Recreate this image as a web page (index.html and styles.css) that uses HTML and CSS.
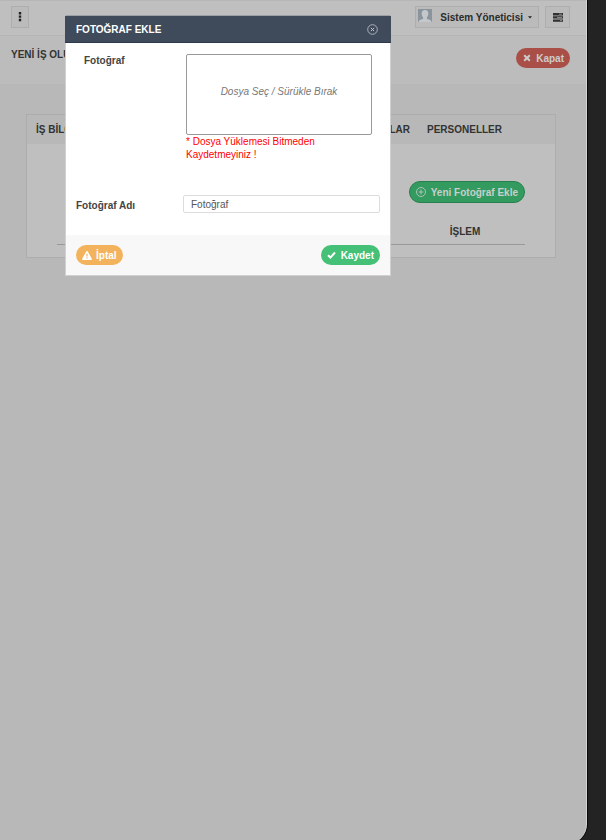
FILE: index.html
```html
<!DOCTYPE html>
<html lang="tr">
<head>
    <meta charset="UTF-8">
    <meta name="viewport" content="width=device-width, initial-scale=1.0">
    <title>Yeni İş</title>
    <link rel="stylesheet" href="styles.css">
</head>
<body>

    <div class="window">
        <!-- Top bar -->
        <header class="topbar">
            <button type="button" class="tool-btn menu-btn" aria-label="Menü">
                <svg width="4" height="10" viewBox="0 0 4 10" fill="#222"><path d="M.8 0h2.4v2.4H.8zM.8 3.4h2.4v2.4H.8zM.8 6.8h2.4v2.4H.8z"/></svg>
            </button>
            <div class="topbar-right">
                <button type="button" class="tool-btn user-btn">
                    <svg class="avatar" width="14" height="14" viewBox="0 0 14 14"><path fill="#89949c" d="M0 0h14v13H0z"/><path fill="#c5c8ca" d="M7 1c2.200 0 3.500 1.500 3.300 3.900-.1 1.600-.7 2.700-1.400 3.400v1.400c.8.700 3.300.8 4.100 2.100L13.500 13H.5l.5-1.200c.8-1.300 3.300-1.400 4.100-2.100V8.300c-.7-.7-1.300-1.800-1.400-3.400C3.500 2.500 4.800 1 7 1z"/></svg>
                    <span>Sistem Yöneticisi</span>
                    <svg class="caret" width="4" height="3" viewBox="0 0 4 3"><path fill="#222" d="M0 .3h4L2 2.500z"/></svg>
                </button>
                <button type="button" class="tool-btn tasks-btn" aria-label="Görevler">
                    <svg width="10" height="9" viewBox="0 0 10 9"><path fill="#303030" d="M0 0h10v2.400H0zM0 3.200h10v2.400H0zM0 6.400h10v2.400H0z"/><path fill="#a0a0a0" d="M6 .8h3v.8H6zM4 4h5v.8H4zM7 7.200h2V8H7z"/></svg>
                </button>
            </div>
        </header>

        <!-- Page heading -->
        <section class="page-head">
            <h1>YENİ İŞ OLU</h1>
            <button type="button" class="pill pill-red">
                <svg width="8" height="8" viewBox="0 0 8 8"><path d="M1.200 1.200l5.600 5.600M6.800 1.200L1.200 6.800" stroke="currentColor" stroke-width="2" fill="none"/></svg>
                <span>Kapat</span>
            </button>
        </section>

        <!-- Tabs and photo list -->
        <main class="content">
            <div class="panel">
                <nav class="tabs">
                    <a href="#is">İŞ BİLGİLERİ</a>
                    <a href="#fotograflar" class="tab-photos">FOTOĞRAFLAR</a>
                    <a href="#personeller">PERSONELLER</a>
                </nav>
                <div class="panel-body">
                    <button type="button" class="pill pill-add">
                        <svg width="10" height="10" viewBox="0 0 10 10" fill="none" stroke="currentColor" stroke-width=".8"><circle cx="5" cy="5" r="4.500"/><path d="M5 2.600v4.800M2.600 5h4.800"/></svg>
                        <span>Yeni Fotoğraf Ekle</span>
                    </button>
                    <table class="photo-table">
                        <thead>
                            <tr><th></th><th class="action-col">İŞLEM</th></tr>
                        </thead>
                    </table>
                </div>
            </div>
        </main>
    </div>

    <!-- Add photo dialog -->
    <form class="modal" role="dialog" aria-labelledby="modalTitle">
        <div class="modal-header">
            <h2 id="modalTitle">FOTOĞRAF EKLE</h2>
            <button type="button" class="modal-close" aria-label="Kapat">
                <svg width="11" height="11" viewBox="0 0 11 11" fill="none" stroke="#c3c9d0" stroke-width=".8"><circle cx="5.500" cy="5.500" r="4.800"/><path d="M3.900 3.900l3.200 3.200M7.100 3.900L3.900 7.100" stroke-width="1"/></svg>
            </button>
        </div>
        <div class="modal-body">
            <div class="upload-row">
                <span class="upload-label" id="uploadLabel">Fotoğraf</span>
                <div class="upload">
                    <button type="button" class="dropzone" aria-describedby="uploadLabel">Dosya Seç / Sürükle Bırak</button>
                    <p class="warning">* Dosya Yüklemesi Bitmeden Kaydetmeyiniz !</p>
                </div>
            </div>
            <div class="name-row">
                <label for="photoName">Fotoğraf Adı</label>
                <input type="text" id="photoName" value="Fotoğraf">
            </div>
        </div>
        <div class="modal-footer">
            <button type="button" class="pill pill-orange">
                <svg width="10" height="9" viewBox="0 0 10 9"><path fill="currentColor" fill-rule="evenodd" d="M5 0c.4 0 .6.2.8.500l4 7.300c.3.600 0 1.200-.7 1.200H.9C.2 9-.1 8.400.2 7.800l4-7.300C4.400.2 4.600 0 5 0zM4.300 2.800l.2 2.800h1l.2-2.800zM4.400 6.300v1.200h1.200V6.300z"/></svg>
                <span>İptal</span>
            </button>
            <button type="button" class="pill pill-green">
                <svg width="9" height="8" viewBox="0 0 9 8"><path d="M1 4.200l2.400 2.300L8 1.500" stroke="currentColor" stroke-width="2" fill="none"/></svg>
                <span>Kaydet</span>
            </button>
        </div>
    </form>

</body>
</html>
```
FILE: styles.css
```css
* {
    box-sizing: border-box;
}

/* General Styling */
body {
    margin: 0;
    height: 100vh;
    overflow: hidden;
    padding-right: 19px;
    background: #232323;
    font-family: "Liberation Sans", Arial, sans-serif;
    font-size: 10px;
    color: #333;
}

button,
input {
    font-family: inherit;
    font-size: inherit;
}

button {
    cursor: pointer;
}

h1,
h2,
p {
    margin: 0;
}

svg {
    display: block;
    flex: none;
}

.window {
    height: calc(100vh + 4px);
    background: #b8b8b8;
    border-right: 1px solid #d6d6d6;
    border-radius: 0 0 20px 0;
    box-shadow: 1px 0 0 #080808;
}

/* Top Bar */
.topbar {
    display: flex;
    justify-content: space-between;
    align-items: center;
    height: 36px;
    padding: 0 16px 2px 11px;
    background: #bfbfbf;
    border-top: 1px solid #b6b6b6;
    border-bottom: 1px solid #b5b5b5;
}

.topbar-right {
    display: flex;
    gap: 6px;
}

.tool-btn {
    display: flex;
    align-items: center;
    justify-content: center;
    height: 22px;
    padding: 0;
    background: #bbb;
    border: 1px solid #aeaeae;
    color: #2b2b2b;
    font-weight: bold;
}

.menu-btn {
    width: 18px;
}

.user-btn {
    gap: 8px;
    padding: 0 6px 0 2px;
}

.user-btn .avatar {
    margin-bottom: 2px;
}

.user-btn .caret {
    margin-left: -3px;
}

.tasks-btn {
    width: 25px;
}

/* Page Heading */
.page-head {
    display: flex;
    justify-content: space-between;
    align-items: flex-start;
    height: 48px;
    padding: 12px 16px 0 11px;
    background: #bcbcbc;
}

.page-head h1 {
    font-size: 10px;
    line-height: 14px;
}

/* Pill Buttons */
.pill {
    display: flex;
    align-items: center;
    justify-content: center;
    gap: 6px;
    height: 20px;
    padding: 0 6px;
    border: 0;
    border-radius: 11px;
    color: #fff;
    font-weight: bold;
}

.pill-red {
    gap: 5px;
    padding: 0 6px 0 7px;
    background: #a94f47;
    color: #ccc;
}

.pill-orange {
    gap: 4px;
    background: #f3b35c;
}

.pill-green {
    gap: 5px;
    background: #44c077;
}

.pill-add {
    height: 22px;
    gap: 5px;
    background: #339a60;
    border: 1px solid #26804c;
    color: #c8d0cb;
}

/* Panel */
.content {
    padding: 30px 30px 0 26px;
}

.panel {
    border: 1px solid #adadad;
    background: #bfbfbf;
}

.tabs {
    display: flex;
    align-items: center;
    gap: 17px;
    height: 29px;
    padding: 0 53px 0 9px;
    background: #b8b8b8;
}

.tabs a {
    color: #333;
    font-weight: bold;
    text-decoration: none;
}

.tab-photos {
    margin-left: auto;
}

.panel-body {
    padding: 37px 30px 12px;
}

.panel-body .pill {
    margin-left: auto;
}

.photo-table {
    width: 100%;
    margin-top: 14px;
    border-collapse: collapse;
}

.photo-table th {
    height: 27px;
    padding: 2px 0 0;
    border-bottom: 1px solid #999;
    text-align: center;
}

.action-col {
    width: 120px;
}

/* Modal */
.modal {
    position: absolute;
    top: 15px;
    left: 65px;
    width: 326px;
    background: #fff;
    border: 1px solid #d0d0d0;
    border-top-color: #9aa0a6;
}

.modal-header {
    display: flex;
    justify-content: space-between;
    align-items: center;
    height: 27px;
    margin: 0 -1px;
    padding: 0 13px 0 11px;
    background: #3f4b5b;
    border-bottom: 1px solid #2c3a4b;
    color: #fff;
}

.modal-header h2 {
    font-size: 10px;
}

.modal-close {
    padding: 0;
    border: 0;
    background: none;
}

.modal-body {
    padding: 11px 10px 22px;
}

.upload-row {
    display: flex;
    padding: 0 8px;
}

.upload-label,
.name-row label {
    color: #444;
    font-weight: bold;
    line-height: 14px;
}

.upload-label {
    width: 102px;
}

.upload {
    flex: 1;
}

.dropzone {
    display: block;
    width: 100%;
    height: 81px;
    padding: 0 0 6px;
    background: #fff;
    border: 1px solid #999;
    border-radius: 2px;
    color: #777;
    font-style: italic;
}

.warning {
    width: 140px;
    color: #f00;
    line-height: 13px;
}

.name-row {
    display: flex;
    align-items: flex-end;
    margin-top: 34px;
}

.name-row label {
    width: 107px;
}

.name-row input {
    flex: 1;
    min-width: 0;
    height: 18px;
    padding: 0 7px;
    border: 1px solid #ddd;
    border-radius: 2px;
    color: #555;
}

.modal-footer {
    display: flex;
    justify-content: space-between;
    align-items: center;
    height: 40px;
    padding: 0 10px;
    background: #f8f8f8;
}
```
